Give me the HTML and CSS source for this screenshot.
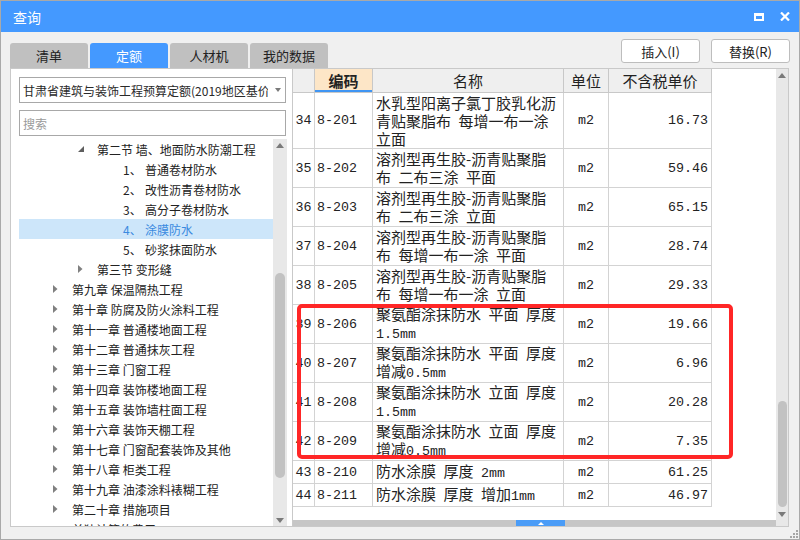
FILE: index.html
```html
<!DOCTYPE html>
<html lang="zh-CN">
<head>
<meta charset="utf-8">
<title>查询</title>
<link rel="stylesheet" href="styles.css">
</head>
<body>
<div class="window">
  <div class="titlebar">
    <span class="title">查询</span>
    <span class="tb-icons">
      <svg width="10" height="8" viewBox="0 0 10 8"><path d="M0 0H10V8H0Z M2 3V6H8V3Z" fill="#fff" fill-rule="evenodd"/></svg>
      <svg width="10" height="9" viewBox="0 0 10 9"><path d="M1 0.5L9 8.5M9 0.5L1 8.5" stroke="#fff" stroke-width="2.2"/></svg>
    </span>
  </div>
  <div class="toolbar">
    <div class="tabs">
      <div class="tab">清单</div>
      <div class="tab active">定额</div>
      <div class="tab">人材机</div>
      <div class="tab">我的数据</div>
    </div>
    <div class="btns">
      <button class="btn">插入(I)</button>
      <button class="btn">替换(R)</button>
    </div>
  </div>
  <div class="main">
    <div class="left">
      <div class="select"><span class="sel-text">甘肃省建筑与装饰工程预算定额(2019地区基价)</span><span class="caret"></span></div>
      <div class="search">搜索</div>
      <div class="tree-wrap">
        <ul class="tree">
          <li class="l1"><span class="tg"><svg width="6" height="6" viewBox="0 0 6 6"><path d="M6 0V6H0Z" fill="#5f5f5f"/></svg></span>第二节 墙、地面防水防潮工程</li>
          <li class="l2"><span class="no">1、</span>普通卷材防水</li>
          <li class="l2"><span class="no">2、</span>改性沥青卷材防水</li>
          <li class="l2"><span class="no">3、</span>高分子卷材防水</li>
          <li class="l2 sel"><span class="no">4、</span>涂膜防水</li>
          <li class="l2"><span class="no">5、</span>砂浆抹面防水</li>
          <li class="l1"><span class="tg"><svg width="5" height="8" viewBox="0 0 5 8"><path d="M0 0L4.5 4L0 8Z" fill="#808080"/></svg></span>第三节 变形缝</li>
          <li class="l0"><span class="tg"><svg width="5" height="8" viewBox="0 0 5 8"><path d="M0 0L4.5 4L0 8Z" fill="#808080"/></svg></span>第九章 保温隔热工程</li>
          <li class="l0"><span class="tg"><svg width="5" height="8" viewBox="0 0 5 8"><path d="M0 0L4.5 4L0 8Z" fill="#808080"/></svg></span>第十章 防腐及防火涂料工程</li>
          <li class="l0"><span class="tg"><svg width="5" height="8" viewBox="0 0 5 8"><path d="M0 0L4.5 4L0 8Z" fill="#808080"/></svg></span>第十一章 普通楼地面工程</li>
          <li class="l0"><span class="tg"><svg width="5" height="8" viewBox="0 0 5 8"><path d="M0 0L4.5 4L0 8Z" fill="#808080"/></svg></span>第十二章 普通抹灰工程</li>
          <li class="l0"><span class="tg"><svg width="5" height="8" viewBox="0 0 5 8"><path d="M0 0L4.5 4L0 8Z" fill="#808080"/></svg></span>第十三章 门窗工程</li>
          <li class="l0"><span class="tg"><svg width="5" height="8" viewBox="0 0 5 8"><path d="M0 0L4.5 4L0 8Z" fill="#808080"/></svg></span>第十四章 装饰楼地面工程</li>
          <li class="l0"><span class="tg"><svg width="5" height="8" viewBox="0 0 5 8"><path d="M0 0L4.5 4L0 8Z" fill="#808080"/></svg></span>第十五章 装饰墙柱面工程</li>
          <li class="l0"><span class="tg"><svg width="5" height="8" viewBox="0 0 5 8"><path d="M0 0L4.5 4L0 8Z" fill="#808080"/></svg></span>第十六章 装饰天棚工程</li>
          <li class="l0"><span class="tg"><svg width="5" height="8" viewBox="0 0 5 8"><path d="M0 0L4.5 4L0 8Z" fill="#808080"/></svg></span>第十七章 门窗配套装饰及其他</li>
          <li class="l0"><span class="tg"><svg width="5" height="8" viewBox="0 0 5 8"><path d="M0 0L4.5 4L0 8Z" fill="#808080"/></svg></span>第十八章 柜类工程</li>
          <li class="l0"><span class="tg"><svg width="5" height="8" viewBox="0 0 5 8"><path d="M0 0L4.5 4L0 8Z" fill="#808080"/></svg></span>第十九章 油漆涂料裱糊工程</li>
          <li class="l0"><span class="tg"><svg width="5" height="8" viewBox="0 0 5 8"><path d="M0 0L4.5 4L0 8Z" fill="#808080"/></svg></span>第二十章 措施项目</li>
          <li class="l0"><span class="tg"></span>单独计算的费用</li>
        </ul>
        <div class="vs">
          <span class="arr"><svg width="8" height="5" viewBox="0 0 8 5"><path d="M0 5L4 0L8 5Z" fill="#7a7a7a"/></svg></span>
          <span class="thumb t-tree"></span>
          <span class="fill"></span>
          <span class="arr"><svg width="8" height="5" viewBox="0 0 8 5"><path d="M0 0L4 5L8 0Z" fill="#7a7a7a"/></svg></span>
        </div>
      </div>
    </div>
    <div class="right">
      <div class="grid-area">
        <div class="grid-view">
          <div class="row hdr">
            <div class="c"></div>
            <div class="c code-h">编码</div>
            <div class="c ctr">名称</div>
            <div class="c ctr">单位</div>
            <div class="c ctr">不含税单价</div>
          </div>
          <div class="row r3">
            <div class="c num mono">34</div><div class="c code mono">8-201</div>
            <div class="c name"><span>水乳型阳离子氯丁胶乳化沥<br>青贴聚脂布&ensp;每增一布一涂<br>立面</span></div>
            <div class="c unit mono">m2</div><div class="c price mono">16.73</div>
          </div>
          <div class="row r2">
            <div class="c num mono">35</div><div class="c code mono">8-202</div>
            <div class="c name"><span>溶剂型再生胶-沥青贴聚脂<br>布&ensp;二布三涂&ensp;平面</span></div>
            <div class="c unit mono">m2</div><div class="c price mono">59.46</div>
          </div>
          <div class="row r2">
            <div class="c num mono">36</div><div class="c code mono">8-203</div>
            <div class="c name"><span>溶剂型再生胶-沥青贴聚脂<br>布&ensp;二布三涂&ensp;立面</span></div>
            <div class="c unit mono">m2</div><div class="c price mono">65.15</div>
          </div>
          <div class="row r2">
            <div class="c num mono">37</div><div class="c code mono">8-204</div>
            <div class="c name"><span>溶剂型再生胶-沥青贴聚脂<br>布&ensp;每增一布一涂&ensp;平面</span></div>
            <div class="c unit mono">m2</div><div class="c price mono">28.74</div>
          </div>
          <div class="row r2">
            <div class="c num mono">38</div><div class="c code mono">8-205</div>
            <div class="c name"><span>溶剂型再生胶-沥青贴聚脂<br>布&ensp;每增一布一涂&ensp;立面</span></div>
            <div class="c unit mono">m2</div><div class="c price mono">29.33</div>
          </div>
          <div class="row r2">
            <div class="c num mono">39</div><div class="c code mono">8-206</div>
            <div class="c name"><span>聚氨酯涂抹防水&ensp;平面&ensp;厚度<br><span class="mono">1.5mm</span></span></div>
            <div class="c unit mono">m2</div><div class="c price mono">19.66</div>
          </div>
          <div class="row r2">
            <div class="c num mono">40</div><div class="c code mono">8-207</div>
            <div class="c name"><span>聚氨酯涂抹防水&ensp;平面&ensp;厚度<br>增减<span class="mono">0.5mm</span></span></div>
            <div class="c unit mono">m2</div><div class="c price mono">6.96</div>
          </div>
          <div class="row r2">
            <div class="c num mono">41</div><div class="c code mono">8-208</div>
            <div class="c name"><span>聚氨酯涂抹防水&ensp;立面&ensp;厚度<br><span class="mono">1.5mm</span></span></div>
            <div class="c unit mono">m2</div><div class="c price mono">20.28</div>
          </div>
          <div class="row r2">
            <div class="c num mono">42</div><div class="c code mono">8-209</div>
            <div class="c name"><span>聚氨酯涂抹防水&ensp;立面&ensp;厚度<br>增减<span class="mono">0.5mm</span></span></div>
            <div class="c unit mono">m2</div><div class="c price mono">7.35</div>
          </div>
          <div class="row r1">
            <div class="c num mono">43</div><div class="c code mono">8-210</div>
            <div class="c name"><span>防水涂膜&ensp;厚度&ensp;<span class="mono">2mm</span></span></div>
            <div class="c unit mono">m2</div><div class="c price mono">61.25</div>
          </div>
          <div class="row r1">
            <div class="c num mono">44</div><div class="c code mono">8-211</div>
            <div class="c name"><span>防水涂膜&ensp;厚度&ensp;增加<span class="mono">1mm</span></span></div>
            <div class="c unit mono">m2</div><div class="c price mono">46.97</div>
          </div>
        </div>
        <div class="vs vs2">
          <span class="arr"><svg width="8" height="5" viewBox="0 0 8 5"><path d="M0 5L4 0L8 5Z" fill="#7a7a7a"/></svg></span>
          <span class="thumb t-grid"></span>
          <span class="fill"></span>
          <span class="arr"><svg width="8" height="5" viewBox="0 0 8 5"><path d="M0 0L4 5L8 0Z" fill="#7a7a7a"/></svg></span>
        </div>
      </div>
      <div class="hrow">
        <div class="hbar"><span class="handle"><svg width="6" height="3" viewBox="0 0 6 3"><path d="M0 3L3 0L6 3Z" fill="#fff"/></svg></span></div>
        <div class="corner"></div>
      </div>
    </div>
  </div>
  <div class="status">
    <svg width="8" height="8" viewBox="0 0 8 8" fill="#a5a5a5"><rect x="6" y="0" width="2" height="2"/><rect x="3" y="3" width="2" height="2"/><rect x="6" y="3" width="2" height="2"/><rect x="0" y="6" width="2" height="2"/><rect x="3" y="6" width="2" height="2"/><rect x="6" y="6" width="2" height="2"/></svg>
  </div>
</div>
<div class="mark"></div>
</body>
</html>
```
FILE: styles.css
```css
* { box-sizing: border-box; margin: 0; padding: 0; }
html, body { width: 800px; height: 540px; overflow: hidden; }
body {
  position: relative;
  background: #f0f0f0;
  font-family: "Noto Sans CJK SC", "Noto Sans", sans-serif;
  color: #222;
}
.window {
  width: 800px;
  height: 540px;
  border: 1px solid #a9a9a9;
  display: flex;
  flex-direction: column;
  background: #f0f0f0;
}
.titlebar {
  height: 31px;
  flex: none;
  background: #4499ff;
  display: flex;
  align-items: center;
  padding: 0 9px 0 12px;
  color: #fff;
}
.title { flex: 1; font-size: 14px; }
.tb-icons { display: flex; align-items: center; gap: 16px; }

.toolbar {
  height: 36px;
  flex: none;
  display: flex;
  justify-content: space-between;
  padding: 0 9px;
}
.tabs { display: flex; gap: 2px; align-self: flex-end; }
.tab {
  width: 78px;
  height: 25px;
  background: #c0c0c0;
  border-radius: 3px 3px 0 0;
  font-size: 13px;
  display: flex;
  align-items: center;
  justify-content: center;
  color: #222;
}
.tab.active { background: #4499ff; color: #fff; }
.btns { display: flex; gap: 11px; padding-top: 7px; }
.btn {
  width: 79px;
  height: 24px;
  border: 1px solid #bdbdbd;
  border-radius: 3px;
  background: #fff;
  font: 13px "Noto Sans CJK SC", sans-serif;
  color: #222;
}

.main {
  height: 459px;
  flex: none;
  display: flex;
  padding: 0 10px 0 9px;
}
.left {
  width: 282px;
  flex: none;
  background: #fff;
  border: 1px solid #c9c9c9;
  border-right: none;
  display: flex;
  flex-direction: column;
  padding-left: 8px;
}
.select {
  margin-top: 8px;
  width: 267px;
  height: 26px;
  flex: none;
  border: 1px solid #a8a8a8;
  display: flex;
  align-items: center;
  padding-left: 3px;
  font-size: 12px;
}
.sel-text { width: 245px; overflow: hidden; white-space: nowrap; color: #2a2a2a; }
.caret {
  margin-left: 7px;
  width: 0; height: 0;
  border-left: 3.5px solid transparent;
  border-right: 3.5px solid transparent;
  border-top: 4px solid #7a7a7a;
}
.search {
  margin-top: 7px;
  width: 267px;
  height: 26px;
  flex: none;
  border: 1px solid #a8a8a8;
  padding-left: 3px;
  font-size: 12px;
  color: #9a9a9a;
  display: flex;
  align-items: center;
}
.tree-wrap { margin-top: 3px; height: 387px; display: flex; }
.tree { list-style: none; width: 254px; overflow: hidden; font-size: 12px; }
.tree li { height: 20px; display: flex; align-items: center; white-space: nowrap; color: #222; }
.l0 { padding-left: 34px; }
.l1 { padding-left: 59px; }
.l2 { padding-left: 104px; }
.tg { width: 19px; flex: none; display: flex; align-items: center; }
.no { width: 22px; flex: none; }
.tree li.sel { background: #cde6fa; color: #3a8ae0; }

.vs {
  width: 14px;
  flex: none;
  background: #e8e8e8;
  display: flex;
  flex-direction: column;
  align-items: center;
}
.arr { height: 12px; flex: none; display: flex; align-items: center; justify-content: center; }
.thumb { width: 10px; background: #c2c2c2; border-radius: 5px; flex: none; }
.t-tree { margin-top: 122px; height: 205px; }
.fill { flex: 1; }

.right {
  width: 497px;
  flex: none;
  background: #fff;
  border: 1px solid #c9c9c9;
  display: flex;
  flex-direction: column;
}
.grid-area { height: 451px; display: flex; }
.grid-view { width: 483px; flex: none; overflow: hidden; }
.vs2 { width: 12px; }
.t-grid { margin-top: 320px; height: 106px; width: 9px; }

.row {
  display: grid;
  grid-template-columns: 22px 58px 191px 45px 103px;
  width: 419px;
  border-bottom: 1px solid #d3d3d3;
}
.hdr { height: 24px; background: #efefef; border-bottom-color: #c8c8c8; font-size: 15px; }
.r3 { height: 56px; }
.r2 { height: 39px; }
.r1 { height: 23px; }
.c {
  border-right: 1px solid #d3d3d3;
  display: flex;
  align-items: center;
  white-space: nowrap;
  overflow: hidden;
}
.hdr .c { border-right-color: #c8c8c8; }
.ctr { justify-content: center; }
.code-h {
  justify-content: center;
  background: #fde6c7;
  font-weight: bold;
  box-shadow: inset 0 -2px 0 #3f95f3;
}
.mono { font-family: "Liberation Mono", monospace; font-size: 13.33px; }
.num { justify-content: center; color: #222; }
.code { padding-left: 2px; }
.name { font-size: 15px; line-height: 18px; padding-left: 3px; }
.unit { justify-content: center; }
.price { justify-content: flex-end; padding-right: 3px; }

.hrow { height: 6px; display: flex; }
.hbar { width: 483px; flex: none; background: #c6c6c6; display: flex; }
.handle {
  margin-left: 223px;
  width: 49px;
  height: 6px;
  background: #4a9cf7;
  display: flex;
  align-items: center;
  justify-content: center;
}
.corner { flex: 1; background: #e8e8e8; }

.status {
  flex: 1;
  display: flex;
  justify-content: flex-end;
  align-items: flex-end;
  padding: 0 1px 1px 0;
}

.mark {
  position: absolute;
  left: 297px;
  top: 304px;
  width: 436px;
  height: 155px;
  border: 4px solid #ff2626;
  border-radius: 5px;
}
```
